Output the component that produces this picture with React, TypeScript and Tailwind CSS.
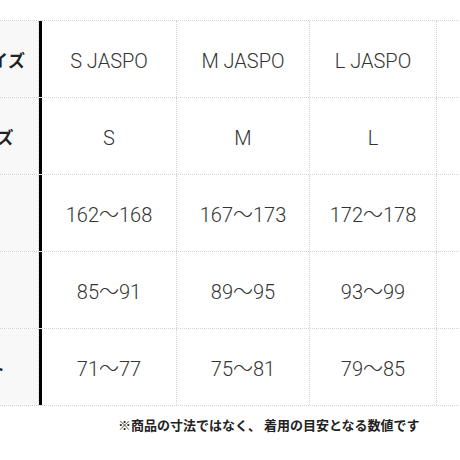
import React from 'react';

const rows = [
  { label: 'JASPOサイズ', values: ['S JASPO', 'M JASPO', 'L JASPO'] },
  { label: '日本サイズ', values: ['S', 'M', 'L'] },
  { label: '身長', values: ['162〜168', '167〜173', '172〜178'] },
  { label: '胸囲', values: ['85〜91', '89〜95', '93〜99'] },
  { label: 'ウエスト', values: ['71〜77', '75〜81', '79〜85'] },
];

const colWidths = ['w-[135px]', 'w-[133px]', 'w-[127px]'];

export default function App() {
  return (
    <div
      className="w-[460px] h-[460px] overflow-hidden bg-white"
      style={{ fontFamily: 'Roboto, "Noto Sans CJK JP", sans-serif' }}
    >
      <div className="pt-[20px] ml-[-97px] w-[700px]">
        <div className="flex flex-col border-t border-dotted border-[#d4d4d4]">
          {rows.map((row, i) => (
            <div key={i} className="flex h-[77px] border-b border-dotted border-[#d4d4d4]">
              <div className="w-[136px] shrink-0 bg-[#f8f8f8] border-r border-dotted border-[#d4d4d4] flex items-center justify-center pt-[2px]">
                <span
                  className="text-[17px] font-bold text-[#222] whitespace-nowrap tracking-[0.5px]"
                  style={{ fontFamily: '"Noto Sans CJK JP", sans-serif' }}
                >
                  {row.label}
                </span>
              </div>
              <div className="w-[3px] shrink-0 bg-black" />
              {row.values.map((v, j) => (
                <div
                  key={j}
                  className={`${colWidths[j]} shrink-0 border-r border-dotted border-[#d4d4d4] flex items-center justify-center pt-[4px]`}
                >
                  <span className="text-[20px] font-light text-[#333] whitespace-nowrap">{v}</span>
                </div>
              ))}
              <div className="w-[133px] shrink-0 border-r border-dotted border-[#d4d4d4]" />
            </div>
          ))}
        </div>
      </div>
      <p
        className="mt-[10px] pl-[118px] text-[13px] leading-[18px] font-bold text-[#222] whitespace-nowrap"
        style={{ fontFamily: '"Noto Sans CJK JP", sans-serif' }}
      >
        ※商品の寸法ではなく、 着用の目安となる数値です
      </p>
    </div>
  );
}
